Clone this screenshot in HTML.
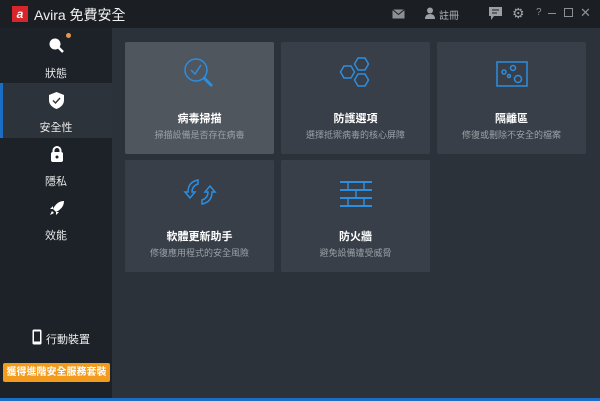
<!DOCTYPE html>
<html><head><meta charset="utf-8"><style>
*{margin:0;padding:0;box-sizing:border-box}
body{width:600px;height:401px;background:#2c323a;font-family:"Liberation Sans","Noto Sans CJK TC",sans-serif;position:relative;overflow:hidden;color:#fff}
.top{position:absolute;left:0;top:0;width:600px;height:28px;background:#1b1f24}
.side{position:absolute;left:0;top:28px;width:112px;height:373px;background:#1d2228}
.item{position:absolute;left:0;width:112px;text-align:center;font-size:11px;color:#e8e8e8}
.card{position:absolute;width:149px;height:112px;background:#383f48;border-radius:2px;text-align:center}
.card svg{position:absolute;left:57px;top:14px}
.card .t{position:absolute;top:68px;width:100%;font-size:11px;font-weight:bold;color:#fff}
.card .s{position:absolute;top:86px;width:100%;font-size:9px;color:#9aa0a6}
</style></head><body>
<div class="top">
 <div style="position:absolute;left:12px;top:6px;width:16px;height:16px;background:#d7262b;color:#fff;font-size:12px;line-height:16px;text-align:center;font-style:italic;font-weight:bold">a</div>
 <div style="position:absolute;left:34px;top:5px;font-size:14px;color:#f0f0f0">Avira 免費安全</div>
 <svg style="position:absolute;left:392px;top:9px" width="13" height="10"><rect x="0.5" y="0.5" width="12" height="9" fill="#8a9096"/><path d="M0.5 0.5 L6.5 5.5 L12.5 0.5" stroke="#1b1f24" fill="none"/></svg>
 <svg style="position:absolute;left:425px;top:7px" width="10" height="12"><circle cx="5" cy="3.5" r="3" fill="#9aa0a6"/><path d="M0 12 Q0 7 5 7 Q10 7 10 12Z" fill="#9aa0a6"/></svg>
 <div style="position:absolute;left:439px;top:7px;font-size:10px;color:#b0b4b8">註冊</div>
 <svg style="position:absolute;left:489px;top:7px" width="13" height="13"><path d="M0 0H13V9H5L2 13V9H0Z" fill="#9aa0a6"/><path d="M3 3H10M3 6H8" stroke="#1b1f24"/></svg>
 <div style="position:absolute;left:512px;top:6px;font-size:14px;color:#a0a4a8;line-height:14px">⚙</div>
 <div style="position:absolute;left:536px;top:7px;font-size:10px;color:#8a9096">?</div>
 <div style="position:absolute;left:548px;top:13px;width:8px;height:1px;background:#8a9096"></div>
 <div style="position:absolute;left:564px;top:8px;width:9px;height:9px;border:1px solid #8a9096"></div>
 <div style="position:absolute;left:580px;top:5px;font-size:13px;color:#8a9096">✕</div>
</div>
<div class="side">
 <div style="position:absolute;left:0;top:55px;width:112px;height:55px;background:#2d333a"></div>
 <div style="position:absolute;left:0;top:55px;width:3px;height:55px;background:#1a6fc4"></div>
 <svg style="position:absolute;left:49px;top:10px" width="16" height="16"><circle cx="6" cy="6" r="5.5" fill="#fff"/><path d="M9.5 9.5L14 14" stroke="#fff" stroke-width="2.5"/></svg>
 <div style="position:absolute;left:66px;top:5px;width:5px;height:5px;border-radius:50%;background:#e8974a"></div>
 <div class="item" style="top:37px">狀態</div>
 <svg style="position:absolute;left:49px;top:64px" width="15" height="17"><path d="M7.5 0L15 3V8Q15 14 7.5 17Q0 14 0 8V3Z" fill="#fff"/><path d="M4 8.5L6.5 11L11 6" stroke="#2d333a" stroke-width="1.4" fill="none"/></svg>
 <div class="item" style="top:91px">安全性</div>
 <svg style="position:absolute;left:51px;top:118px" width="12" height="16"><path d="M2.5 7V4.5A3.5 3.5 0 0 1 9.5 4.5V7" stroke="#fff" stroke-width="2" fill="none"/><rect x="0" y="6" width="12" height="10" rx="2" fill="#fff"/><circle cx="6" cy="11" r="1.5" fill="#1d2228"/></svg>
 <div class="item" style="top:145px">隱私</div>
 <svg style="position:absolute;left:49px;top:172px" width="16" height="16"><path d="M15 1Q8 1 4 9L7 12Q15 8 15 1Z" fill="#fff"/><path d="M4 9L1 9L4 6ZM7 12L7 15L10 12Z M3 11L1 15L5 13Z" fill="#fff"/></svg>
 <div class="item" style="top:199px">效能</div>
 <svg style="position:absolute;left:32px;top:301px" width="10" height="16"><rect x="0.5" y="0.5" width="9" height="15" rx="1.5" fill="#fff"/><rect x="2" y="2.5" width="6" height="10" fill="#1d2228"/></svg>
 <div style="position:absolute;left:46px;top:303px;font-size:11px;color:#eee">行動裝置</div>
 <div style="position:absolute;left:3px;top:335px;width:107px;height:19px;background:#f29b1c;border-radius:2px;font-size:10px;font-weight:bold;color:#fff;text-align:center;line-height:19px">獲得進階安全服務套裝</div>
</div>
<div style="position:absolute;left:0;top:398px;width:600px;height:3px;background:#1a6fc4"></div>

<div class="card" style="left:125px;top:42px;background:#50565e">
 <svg width="36" height="36"><circle cx="14" cy="14" r="11" stroke="#2c8ee0" stroke-width="1.5" fill="none"/><path d="M9 14L13 18L19 9" stroke="#2c8ee0" stroke-width="1.5" fill="none"/><path d="M22 22L30 30" stroke="#2c8ee0" stroke-width="3"/></svg>
 <div class="t">病毒掃描</div><div class="s">掃描設備是否存在病毒</div></div>
<div class="card" style="left:281px;top:42px">
 <svg width="36" height="36"><g stroke="#2c8ee0" stroke-width="1.5" fill="none"><path d="M20 2h7l3.5 6-3.5 6h-7l-3.5-6z"/><path d="M6 10h7l3.5 6-3.5 6H6L2.5 16z"/><path d="M20 18h7l3.5 6-3.5 6h-7l-3.5-6z"/></g></svg>
 <div class="t">防護選項</div><div class="s">選擇抵禦病毒的核心屏障</div></div>
<div class="card" style="left:437px;top:42px">
 <svg width="36" height="36"><g stroke="#2c8ee0" stroke-width="1.5" fill="none"><rect x="3" y="6" width="30" height="24"/><circle cx="10" cy="16" r="2"/><circle cx="19" cy="12" r="2.5"/><circle cx="15" cy="20" r="1.5"/><circle cx="24" cy="23" r="3.5"/></g></svg>
 <div class="t">隔離區</div><div class="s">修復或刪除不安全的檔案</div></div>
<div class="card" style="left:125px;top:160px">
 <svg width="36" height="36"><g stroke="#2c8ee0" stroke-width="1.5" fill="none"><path d="M16 6Q6 8 6 18L3 18L8 24L13 18L10 18Q10 12 16 10Z"/><path d="M20 30Q30 28 30 18L33 18L28 12L23 18L26 18Q26 24 20 26Z"/></g></svg>
 <div class="t">軟體更新助手</div><div class="s">修復應用程式的安全風險</div></div>
<div class="card" style="left:281px;top:160px">
 <svg width="36" height="36"><g stroke="#2c8ee0" stroke-width="1.5" fill="none"><path d="M2 8H34M2 16H34M2 24H34M2 32H34" stroke-width="2"/><path d="M10 8V16M26 8V16M18 16V24M10 24V32M26 24V32"/></g></svg>
 <div class="t">防火牆</div><div class="s">避免設備遭受威脅</div></div>
</body></html>
